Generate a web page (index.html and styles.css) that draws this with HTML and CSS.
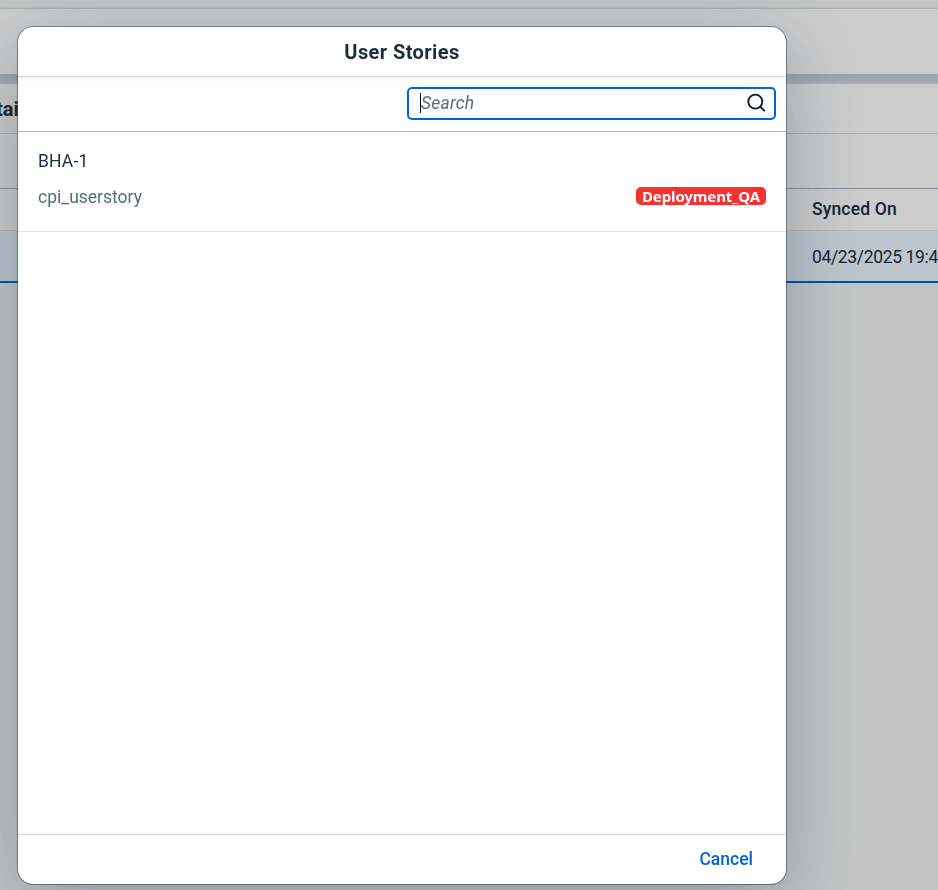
FILE: index.html
```html
<!DOCTYPE html>
<html lang="en">
<head>
<meta charset="utf-8">
<title>User Stories</title>
<link rel="stylesheet" href="styles.css">
</head>
<body>
<main class="page">
  <div class="page-header"></div>
  <div class="page-gap"></div>
  <div class="section-title"><span class="t-details">tails</span></div>
  <div class="toolbar"></div>
  <div class="column-head"><span class="t-synced">Synced On</span></div>
  <div class="data-row"><span class="t-date">04/23/2025 19:45</span></div>
</main>
<div class="overlay">
  <section class="dialog" role="dialog" aria-label="User Stories">
    <header class="dialog-header"><h1 class="t-title">User Stories</h1></header>
    <div class="search-bar">
      <div class="search-field">
        <span class="caret"></span>
        <span class="t-search">Search</span>
        <svg class="search-icon" width="20" height="20" viewBox="0 0 20 20" fill="none" stroke="#131e29" stroke-width="1.9" stroke-linecap="round"><circle cx="9.3" cy="8.6" r="7"/><path d="M14.4 13.8L18.3 17.7"/></svg>
      </div>
    </div>
    <ul class="list">
      <li class="item">
        <div class="item-title"><span class="t-id">BHA-1</span></div>
        <div class="item-detail"><span class="t-story">cpi_userstory</span><span class="badge"><span class="t-badge">Deployment_QA</span></span></div>
      </li>
    </ul>
    <footer class="dialog-footer"><button class="cancel" type="button">Cancel</button></footer>
  </section>
</div>
</body>
</html>
```
FILE: styles.css
```css
* { box-sizing: border-box; }
body {
  margin: 0;
  height: 890px;
  overflow: hidden;
  font-family: Roboto, "Liberation Sans", sans-serif;
  font-size: 17.5px;
  color: #1d2d3e;
  background: #f5f6f7;
}
span, h1 { white-space: nowrap; }
.page { padding-top: 9px; height: 890px; overflow: hidden; }
.page-header { height: 65px; background: #fff; box-shadow: 0 0 2px rgba(34, 53, 72, .5); }
.page-gap { height: 10px; background: linear-gradient(#c3cad0, #d3d9de); }
.section-title {
  height: 50px;
  display: flex;
  align-items: center;
  background: #fff;
  border-bottom: 1px solid #d9d9d9;
  font-size: 20px;
  font-weight: 700;
}
.t-details { margin-left: -4px; }
.toolbar { height: 55px; background: #fff; border-bottom: 1px solid #a8b3bd; }
.column-head {
  height: 42px;
  display: flex;
  align-items: center;
  padding: 0 0 2px 812px;
  background: #fff;
  border-bottom: 1px solid #e5e5e5;
  font-weight: 500;
}
.t-synced { letter-spacing: .15px; }
.data-row {
  height: 52px;
  display: flex;
  align-items: center;
  padding: 2px 0 0 812px;
  background: #ebf8ff;
  border-bottom: 2px solid #0064d9;
}
.t-date { letter-spacing: -.35px; }
.overlay {
  position: fixed;
  inset: 0;
  padding: 27px 0 0 18px;
  background: rgba(0, 0, 0, .2);
}
.dialog {
  width: 768px;
  height: 857px;
  display: flex;
  flex-direction: column;
  background: #fff;
  border-radius: 15px;
  box-shadow: 0 0 0 1px rgba(34, 53, 72, .48), 0 20px 80px rgba(34, 53, 72, .33);
}
.dialog-header {
  height: 50px;
  flex: none;
  display: flex;
  align-items: center;
  justify-content: center;
  border-bottom: 1px solid #d5d7d9;
  box-shadow: 0 2px 3px rgba(0, 0, 0, .06);
}
.t-title { margin: 0; font-size: 20px; font-weight: 700; letter-spacing: .42px; }
.search-bar {
  height: 55px;
  flex: none;
  display: flex;
  justify-content: flex-end;
  align-items: center;
  padding: 0 10px 2px 0;
  border-bottom: 1px solid #a8b3bd;
}
.search-field {
  width: 369px;
  height: 33px;
  display: flex;
  align-items: center;
  padding: 0 8px 0 11px;
  border: 2px solid #0064d9;
  border-radius: 5px;
}
.caret { width: 1px; height: 20px; background: #000; }
.t-search { color: #556b82; font-style: italic; letter-spacing: .2px; }
.search-icon { margin-left: auto; }
.list { flex: 1; margin: 0; padding: 0; list-style: none; }
.item { height: 100px; padding: 17px 20px 0; border-bottom: 1px solid #e5e5e5; }
.item-title { height: 24px; display: flex; align-items: center; }
.t-id { letter-spacing: .15px; }
.item-detail {
  height: 24px;
  margin-top: 12px;
  display: flex;
  align-items: center;
  justify-content: space-between;
  color: #556b82;
}
.badge {
  width: 130px;
  height: 18px;
  margin-bottom: 2px;
  display: flex;
  align-items: center;
  justify-content: center;
  border-radius: 5px;
  background: #f53232;
  color: #fff;
  font: 700 15px/18px "Noto Sans", sans-serif;
}
.t-badge { letter-spacing: -.1px; }
.dialog-footer {
  height: 50px;
  flex: none;
  display: flex;
  align-items: center;
  justify-content: flex-end;
  padding: 0 33px 2px 0;
  border-top: 1px solid #d9d9d9;
}
.cancel {
  padding: 0;
  border: 0;
  background: none;
  color: #0064d9;
  font: 500 17.5px Roboto, sans-serif;
}
```
